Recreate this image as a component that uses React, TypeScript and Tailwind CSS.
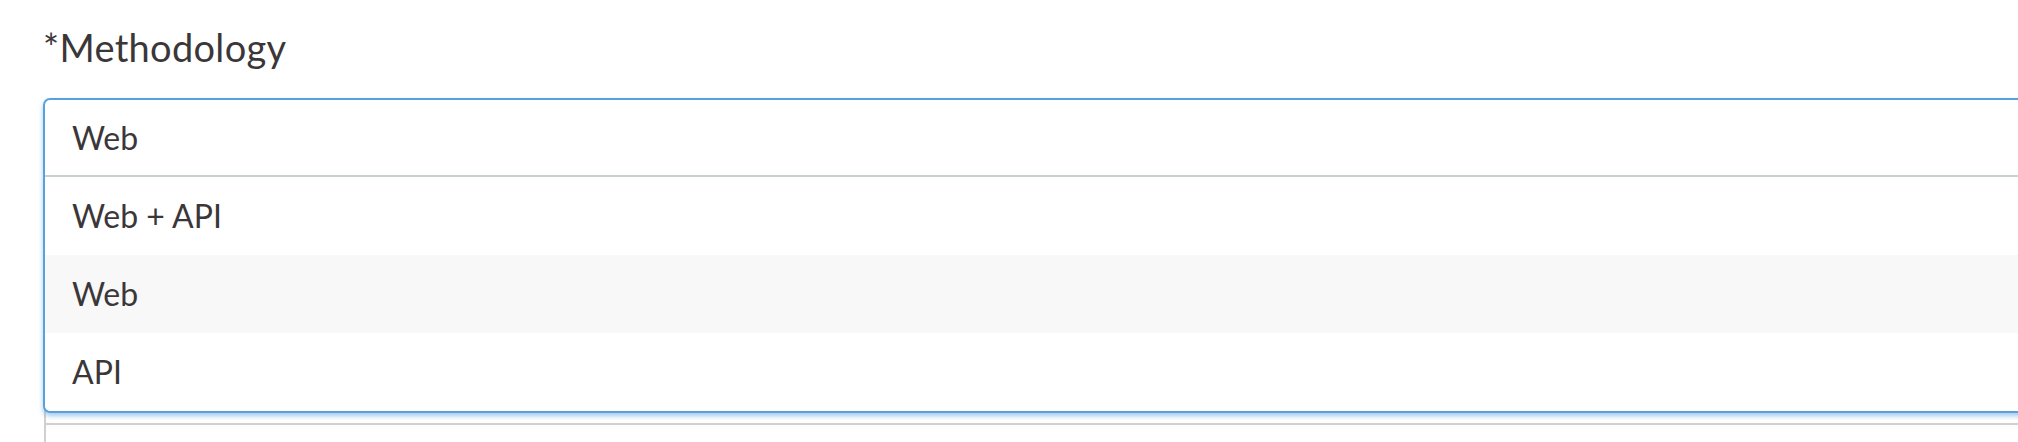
import { useState } from 'react'

const options = ['Web + API', 'Web', 'API']

const App = () => {
    const [selected] = useState('Web')
    const [hovered, setHovered] = useState('Web')

    return (
        <div className="w-[2018px] h-[442px] overflow-hidden bg-white font-['Lato',sans-serif] text-[#3b3739]">
            <div className="pl-[43px] pt-[22px]">
                <label className="block text-[38px] leading-[50px] tracking-[0.3px]">*Methodology</label>

                <div className="relative mt-[26px] w-[2100px]">
                    {/* underlying field */}
                    <div className="absolute left-[1px] top-[300px] h-[80px] w-full border-l-2 border-[#d0d0d0]">
                        <div className="mt-[25px] border-t-2 border-[#d0d0d0] shadow-[0_2px_6px_rgba(0,0,0,0.06)]" />
                    </div>

                    {/* open dropdown */}
                    <div className="relative rounded-[7px] border-2 border-[#58a1dc] bg-white shadow-[0_3px_5px_rgba(88,161,220,0.55)]">
                        <div className="h-[77px] flex items-center pl-[27px] text-[32px] border-b-2 border-[#c8d0d4]">
                            {selected}
                        </div>
                        {options.map((opt) => (
                            <div
                                key={opt}
                                onMouseEnter={() => setHovered(opt)}
                                className={`h-[78px] flex items-center pl-[27px] text-[32px] ${hovered === opt ? 'bg-[#f8f8f8]' : 'bg-white'} last:rounded-b-[6px]`}
                            >
                                {opt}
                            </div>
                        ))}
                    </div>
                </div>
            </div>
        </div>
    )
}

export default App
